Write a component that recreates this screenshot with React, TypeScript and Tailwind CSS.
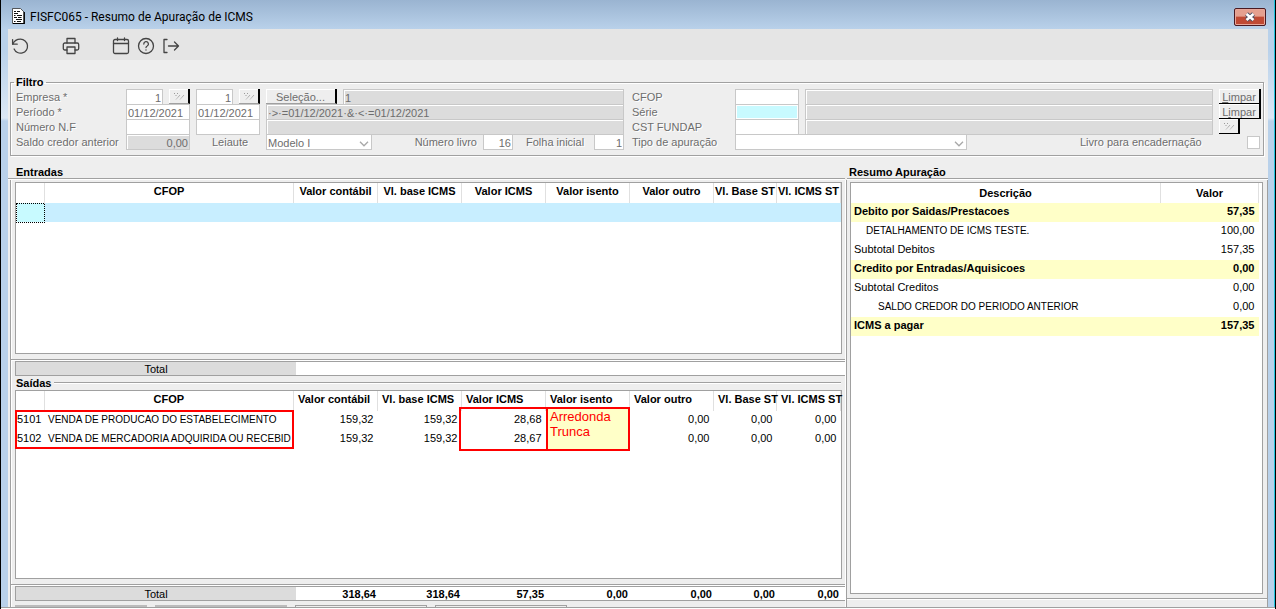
import type { ReactNode } from "react"

const label = "text-[11px] leading-[17px] text-[#6d6d6d] whitespace-nowrap [text-shadow:1px_1px_0_white]"
const field =
  "block h-4 min-w-0 rounded-none border border-[#c8c8c8] bg-white px-px pt-px text-[11px] leading-[14px] text-[#6d6d6d]"
const readOnlyField =
  "block h-4 min-w-0 rounded-none border border-[#c8c8c8] bg-[#dcdcdc] px-px pt-px text-[11px] leading-[14px] text-[#6d6d6d] shadow-[inset_1px_1px_0_white]"
const raised =
  "block h-[15px] border-r-2 border-b border-r-black border-b-[#a0a0a0] bg-[#eeeeee] pt-px text-[11px] leading-[14px] text-[#6d6d6d] shadow-[inset_1px_1px_0_white]"

const columns = [
  { name: "Valor contábil", width: "w-[84px]" },
  { name: "Vl. base ICMS", width: "w-[84px]" },
  { name: "Valor ICMS", width: "w-[84px]" },
  { name: "Valor isento", width: "w-[84px]" },
  { name: "Valor outro", width: "w-[84px]" },
  { name: "Vl. Base ST", width: "w-[63px]" },
  { name: "Vl. ICMS ST", width: "w-[64px]" },
]

const saidas = [
  {
    code: "5101",
    name: "VENDA DE PRODUCAO DO ESTABELECIMENTO",
    values: ["159,32", "159,32", "28,68", "", "0,00", "0,00", "0,00"],
  },
  {
    code: "5102",
    name: "VENDA DE MERCADORIA ADQUIRIDA OU RECEBID",
    values: ["159,32", "159,32", "28,67", "", "0,00", "0,00", "0,00"],
  },
]

const totals = ["318,64", "318,64", "57,35", "0,00", "0,00", "0,00", "0,00"]

const resumo = [
  { name: "Debito por Saidas/Prestacoes", value: "57,35", strong: true, cell: "pl-[3px]" },
  { name: "DETALHAMENTO DE ICMS TESTE.", value: "100,00", strong: false, cell: "pl-[15px] text-[10px]" },
  { name: "Subtotal Debitos", value: "157,35", strong: false, cell: "pl-[3px]" },
  { name: "Credito por Entradas/Aquisicoes", value: "0,00", strong: true, cell: "pl-[3px]" },
  { name: "Subtotal Creditos", value: "0,00", strong: false, cell: "pl-[3px]" },
  { name: "SALDO CREDOR DO PERIODO ANTERIOR", value: "0,00", strong: false, cell: "pl-[27px] text-[10px]" },
  { name: "ICMS a pagar", value: "157,35", strong: true, cell: "pl-[3px]" },
]

function ToolButton({ name, children }: { name: string; children: ReactNode }) {
  return (
    <button type="button" aria-label={name} className="flex h-[18px] w-[18px] items-center justify-center text-[#444444]">
      <svg
        viewBox="0 0 18 18"
        className="h-[18px] w-[18px]"
        fill="none"
        stroke="currentColor"
        strokeWidth="1.3"
        strokeLinecap="round"
        strokeLinejoin="round"
      >
        {children}
      </svg>
    </button>
  )
}

function Toolbar() {
  return (
    <div className="flex h-[31px] shrink-0 items-center bg-[#e5e5e5] pt-[2px] pl-[3px]">
      <ToolButton name="Desfazer">
        <path d="M1.6 2.6v4.6h4.6" />
        <path d="M1.800 7.200C3 4.300 6 2.200 9.500 2.200a7 7 0 1 1-6.400 9.800" />
      </ToolButton>
      <div className="w-[33px]" />
      <ToolButton name="Imprimir">
        <path d="M5 6V1.5h8V6" />
        <path d="M5 13H2.8A1.5 1.5 0 0 1 1.3 11.5V7.5A1.5 1.5 0 0 1 2.8 6h12.4a1.5 1.5 0 0 1 1.5 1.5v4a1.5 1.5 0 0 1-1.5 1.5H13" />
        <path d="M5 10h8v6.5H5z" />
      </ToolButton>
      <div className="w-8" />
      <ToolButton name="Calendário">
        <rect x="1.5" y="2.5" width="15" height="14" rx="1.5" />
        <path d="M1.5 6.5h15M5.500 1v2.500M12.500 1v2.500" />
      </ToolButton>
      <div className="w-[7px]" />
      <ToolButton name="Ajuda">
        <circle cx="9" cy="9" r="7.5" />
        <path d="M6.8 7a2.300 2.300 0 1 1 3.400 2c-.8.400-1.200.8-1.200 1.500M9 12.800v.2" />
      </ToolButton>
      <div className="w-[7px]" />
      <ToolButton name="Sair">
        <path d="M5 2.500H2v13h3" />
        <path d="M6.500 9H16.500M12.500 5l4 4-4 4" />
      </ToolButton>
    </div>
  )
}

function DotsButton({ name, className }: { name: string; className?: string }) {
  return (
    <button type="button" aria-label={name} className={`${raised} w-[21px] ${className ?? ""}`}>
      <svg viewBox="0 0 12 9" className="mx-auto h-[9px] w-3" stroke="#9a9a9a" strokeWidth="1" fill="none">
        <path d="M1 1.5h1M4 1.5h1M2.500 3.500h1" />
        <path d="M7 3L3 7.500M11 3L7 7.500" strokeDasharray="1 .6" />
      </svg>
    </button>
  )
}

function Drop({ name, width, value }: { name: string; width: string; value: string }) {
  return (
    <div className={`relative ${width}`}>
      <select aria-label={name} defaultValue={value} className={`${field} w-full appearance-none`}>
        <option>{value}</option>
      </select>
      <svg viewBox="0 0 10 6" className="pointer-events-none absolute top-[7px] right-[3px] h-[6px] w-[10px]">
        <path d="M1 .8l4 4 4-4" fill="none" stroke="#a8a8a8" strokeWidth="1.300" />
      </svg>
    </div>
  )
}

const filterRow = "grid h-[15px] grid-cols-[104px_64px_64px_358px_99px_64px_1fr_42px] gap-x-[6px]"

function Filtro() {
  return (
    <fieldset className="mt-[16px] mr-[4px] ml-[2px] shrink-0 border border-[#a0a0a0] pr-[2px] pb-[4px] pl-[5px] shadow-[1px_1px_0_white,inset_1px_1px_0_white]">
      <legend className="-ml-[2px] h-[13px] px-[2px] text-[11px] leading-[13px] font-bold">Filtro</legend>
      <div className={filterRow}>
        <label htmlFor="empresa" className={label}>Empresa *</label>
        <div className="flex justify-between">
          <input id="empresa" className={`${field} w-[37px] text-right`} defaultValue="1" />
          <DotsButton name="Buscar empresa inicial" />
        </div>
        <div className="flex justify-between">
          <input aria-label="Empresa final" className={`${field} w-[37px] text-right`} defaultValue="1" />
          <DotsButton name="Buscar empresa final" />
        </div>
        <div className="flex gap-[6px]">
          <button type="button" className={`${raised} w-[71px]`}>Seleção...</button>
          <input aria-label="Seleção" readOnly className={`${readOnlyField} flex-1`} defaultValue="1" />
        </div>
        <label htmlFor="cfop" className={`${label} pl-[2px]`}>CFOP</label>
        <input id="cfop" className={field} />
        <input aria-label="Descrição CFOP" readOnly className={readOnlyField} />
        <button type="button" className={`${raised} border-b-black`}><u>L</u>impar</button>
      </div>
      <div className={filterRow}>
        <label htmlFor="periodo" className={label}>Período *</label>
        <input id="periodo" className={field} defaultValue="01/12/2021" />
        <input aria-label="Período final" className={field} defaultValue="01/12/2021" />
        <input aria-label="Intervalo" readOnly className={readOnlyField} defaultValue="·>·=01/12/2021·&·<·=01/12/2021" />
        <label htmlFor="serie" className={`${label} pl-[2px]`}>Série</label>
        <input
          id="serie"
          className="block h-4 min-w-0 border border-[#c8c8c8] bg-[#c8faff] text-[11px] shadow-[inset_0_0_0_1px_white]"
        />
        <input aria-label="Descrição série" readOnly className={readOnlyField} />
        <button type="button" className={`${raised} border-b-black`}>L<u>i</u>mpar</button>
      </div>
      <div className={filterRow}>
        <label htmlFor="numero" className={label}>Número N.F</label>
        <input id="numero" className={field} />
        <input aria-label="Número N.F final" className={field} />
        <input aria-label="Intervalo N.F" readOnly className={readOnlyField} />
        <label htmlFor="cst" className={`${label} pl-[2px]`}>CST FUNDAP</label>
        <input id="cst" className={field} />
        <input aria-label="Descrição CST" readOnly className={readOnlyField} />
        <DotsButton name="Buscar CST" className="border-b-black" />
      </div>
      <div className="flex h-[17px]">
        <div className="flex w-[614px] shrink-0">
          <label htmlFor="saldo" className={`${label} w-[110px]`}>Saldo credor anterior</label>
          <input id="saldo" readOnly className={`${readOnlyField} w-[64px] text-right`} defaultValue="0,00" />
          <span className={`${label} w-[76px] pl-[22px]`}>Leiaute</span>
          <Drop name="Leiaute" width="w-[106px]" value="Modelo I" />
          <label htmlFor="livro" className={`${label} ml-auto pr-[6px]`}>Número livro</label>
          <input id="livro" className={`${field} w-[30px] text-right`} defaultValue="16" />
          <label htmlFor="folha" className={`${label} w-[81px] pl-[13px]`}>Folha inicial</label>
          <input id="folha" className={`${field} mr-[6px] w-[30px] text-right`} defaultValue="1" />
        </div>
        <span className={`${label} w-[105px] shrink-0 pl-[2px]`}>Tipo de apuração</span>
        <Drop name="Tipo de apuração" width="w-[232px]" value="" />
        <label htmlFor="encadernacao" className={`${label} ml-auto w-[167px]`}>Livro para encadernação</label>
        <input
          id="encadernacao"
          type="checkbox"
          className="mt-[2px] mr-px h-[13px] w-[13px] appearance-none border border-[#c8c8c8] bg-white"
        />
      </div>
    </fieldset>
  )
}

function GridHead({ align }: { align: string }) {
  return (
    <thead>
      <tr className="h-5">
        <th className="w-[28px] border-r border-[#e0e0e0]" />
        <th className="border-r border-[#e0e0e0] p-0 text-center align-top leading-[17px]">CFOP</th>
        {columns.map((c) => (
          <th
            key={c.name}
            className={`${c.width} ${align} border-r border-[#e0e0e0] p-0 align-top leading-[17px] whitespace-nowrap`}
          >
            {c.name}
          </th>
        ))}
      </tr>
    </thead>
  )
}

function TotalRow({ values }: { values: string[] }) {
  return (
    <div className="ml-[4px] flex h-[15px] shrink-0 border border-r-0 border-[#a0a0a0] bg-white pr-[2px] leading-[15px]">
      <div className="min-w-0 flex-1 bg-[#dcdcdc] text-center">Total</div>
      <div className="flex font-bold">
        {columns.map((c, i) => (
          <div key={c.name} className={`${c.width} pr-[4px] text-right`}>{values[i]}</div>
        ))}
      </div>
    </div>
  )
}

function Divider() {
  return <div className="h-[2px] shrink-0 border-t border-[#a0a0a0] bg-white" />
}

export default function App() {
  return (
    <div className="flex h-screen min-h-[500px] flex-col overflow-hidden border-x border-x-black bg-[linear-gradient(#b9d1ea_50px,#dce8f5_118px,#b9d1ea_121px)] font-['Liberation_Sans',Arial,sans-serif] text-[11px] text-black shadow-[inset_-1px_0_0_#22c4dd]">
      <header className="mr-px flex h-[29px] shrink-0 items-center bg-linear-to-b from-[#9ab4d1] to-[#b9d1ea] pr-[8px] pl-[10px]">
        <svg viewBox="0 0 14 16" className="mt-[2px] h-4 w-[14px]">
          <path d="M1.500 .5h8l3.500 3.500v11.500H1.500z" fill="#fff" stroke="#333" strokeWidth=".8" />
          <path d="M13.200 4v11.600H2" fill="none" stroke="#000" strokeWidth="1.400" />
          <path
            d="M3 3.500h2M6 3.500h3M3 5.500h4M3 7.500h1.500M6 7.500h5M3 9.500h3M7 9.500h3.500M5 11.500h6M3 13.500h1.500M6 13.500h4"
            stroke="#111"
            strokeWidth="1"
          />
        </svg>
        <h1 className="ml-[5px] flex-1 pt-[5px] font-[Roboto,sans-serif] text-[12px] leading-4">
          FISFC065 - Resumo de Apuração de ICMS
        </h1>
        <button
          type="button"
          aria-label="Fechar"
          className="mt-[5px] flex h-[18px] w-8 items-center justify-center rounded-[2px] border border-[#4a1a22] bg-linear-to-b from-[#e5a08f] from-45% to-[#c04a34] to-50% shadow-[inset_0_0_0_1px_#e8a79a]"
        >
          <svg viewBox="0 0 12 10" className="h-[10px] w-3">
            <path d="M2.500 2l7 6M9.500 2l-7 6" stroke="#4d5266" strokeWidth="4.400" />
            <path d="M2.500 2l7 6M9.500 2l-7 6" stroke="#fff" strokeWidth="2.600" />
          </svg>
        </button>
      </header>

      <main className="mr-[7px] ml-[7px] flex min-h-0 flex-1 flex-col bg-[#eeeeee]">
        <Toolbar />
        <Filtro />

        <div className="mt-[10px] flex min-h-0 flex-1">
          <section className="flex min-w-0 flex-1 flex-col">
            <h2 className="h-[12px] shrink-0 pl-2 leading-[12px] font-bold">Entradas</h2>
            <Divider />
            <div className="ml-[2px] flex min-h-0 flex-1 flex-col border-l border-[#a0a0a0] pt-[2px] shadow-[inset_1px_0_0_white]">
              <div className="mr-[3px] ml-[4px] min-h-0 flex-[172] border border-[#a0a0a0] bg-white">
                <table className="w-full table-fixed border-collapse">
                  <GridHead align="text-center" />
                  <tbody>
                    <tr className="h-[19px] bg-[#c8eeff]">
                      <td className="border border-dotted border-black bg-[#c8faff]" />
                      <td colSpan={8} />
                    </tr>
                  </tbody>
                </table>
              </div>
              <div className="h-[5px] shrink-0" />
              <Divider />
              <TotalRow values={[]} />
              <div className="flex h-[14px] shrink-0 items-center pr-[4px] pl-[5px]">
                <h2 className="pr-[3px] font-bold">Saídas</h2>
                <div className="flex-1"><Divider /></div>
              </div>
              <div className="relative mr-[3px] ml-[4px] min-h-0 flex-[189] border border-[#a0a0a0] bg-white">
                <table className="w-full table-fixed border-collapse">
                  <GridHead align="text-left pl-1" />
                  <tbody>
                    {saidas.map((row) => (
                      <tr key={row.code} className="h-[19px]">
                        <td className="p-0 pb-[2px] pl-px">{row.code}</td>
                        <td className="p-0 pb-[2px] pl-[4px] text-[10px] whitespace-nowrap">{row.name}</td>
                        {row.values.map((v, i) => (
                          <td key={i} className="p-0 pr-[4px] pb-[2px] text-right">{v}</td>
                        ))}
                      </tr>
                    ))}
                  </tbody>
                </table>
                <div className="absolute top-[19px] right-[547px] -left-px h-[39px] border-2 border-[#ff0000]" />
                <div className="absolute top-[16px] right-[293px] h-[44px] w-[89px] border-2 border-[#ff0000]" />
                <div className="absolute top-[16px] right-[211px] h-[44px] w-[84px] border-2 border-[#ff0000] bg-[#ffffc8] pl-[2px] text-[13px] leading-[15px] text-[#ff0000]">
                  <p>Arredonda</p>
                  <p>Trunca</p>
                </div>
              </div>
              <div className="h-[5px] shrink-0" />
              <Divider />
              <TotalRow values={totals} />
              <div className="mt-[4px] ml-[4px] flex h-[2px] shrink-0 gap-2">
                <div className="w-[132px] bg-[#bbbbbb]" />
                <div className="w-[132px] bg-[#bbbbbb]" />
                <div className="w-[132px] border border-b-0 border-[#a0a0a0]" />
                <div className="w-[132px] border border-b-0 border-[#a0a0a0]" />
              </div>
            </div>
          </section>

          <div className="mt-[14px] w-[2px] shrink-0 border-r border-r-[#a0a0a0] bg-white" />

          <section className="flex w-[421px] shrink-0 flex-col">
            <h2 className="h-[12px] shrink-0 pl-[2px] leading-[12px] font-bold">Resumo Apuração</h2>
            <Divider />
            <div className="flex min-h-0 flex-1 flex-col border-r border-[#a0a0a0] pt-[2px]">
              <div className="mr-[4px] ml-[3px] min-h-0 flex-1 border border-[#a0a0a0] bg-white pr-[3px]">
                <table className="w-full table-fixed border-collapse">
                  <thead>
                    <tr className="h-5">
                      <th className="border-r border-[#e0e0e0] p-0">Descrição</th>
                      <th className="w-[98px] border-r border-[#e0e0e0] p-0">Valor</th>
                    </tr>
                  </thead>
                  <tbody>
                    {resumo.map((row) => (
                      <tr key={row.name} className={row.strong ? "h-[19px] bg-[#ffffc8] font-bold" : "h-[19px]"}>
                        <td className={`p-0 pb-[2px] ${row.cell}`}>{row.name}</td>
                        <td className="p-0 pr-[4px] pb-[2px] text-right">{row.value}</td>
                      </tr>
                    ))}
                  </tbody>
                </table>
              </div>
              <div className="h-[4px] shrink-0" />
              <Divider />
              <div className="h-[7px] shrink-0" />
            </div>
          </section>
        </div>
      </main>
      <div className="h-[2px] shrink-0 border-t border-[#a0a0a0] bg-white" />
    </div>
  )
}
